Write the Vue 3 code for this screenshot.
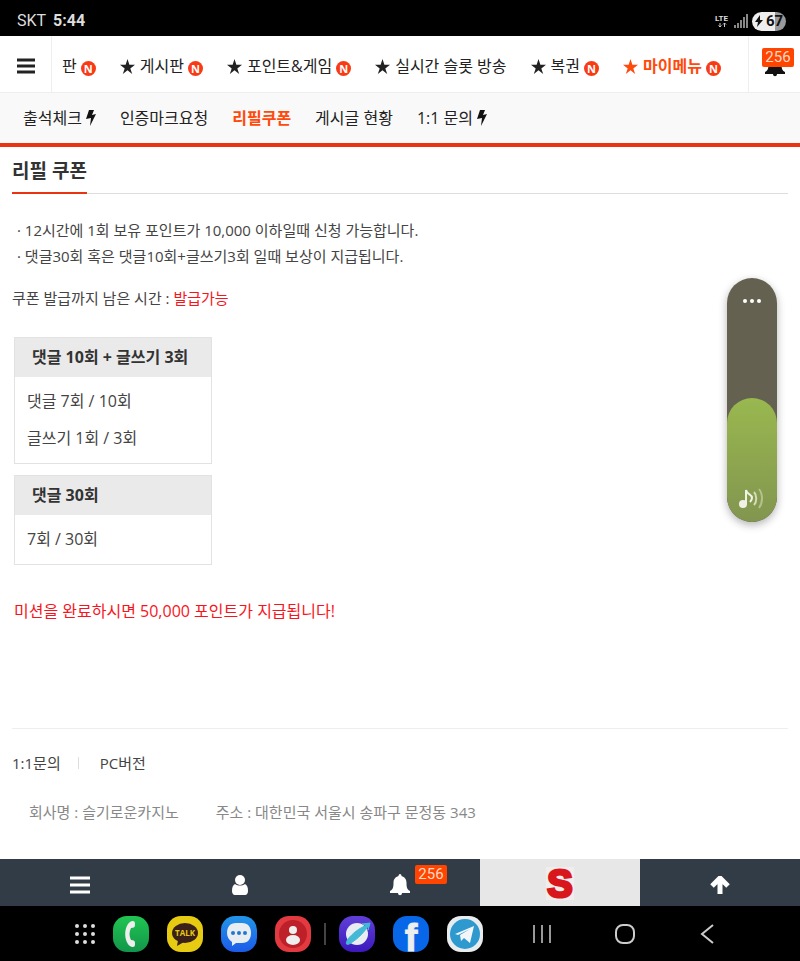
<script setup>
import { ref } from 'vue';

const mainMenu = ref([
  { id: 1, title: '판', star: false, isNew: true },
  { id: 2, title: '게시판', star: true, isNew: true },
  { id: 3, title: '포인트&게임', star: true, isNew: true },
  { id: 4, title: '실시간 슬롯 방송', star: true, isNew: false },
  { id: 5, title: '복권', star: true, isNew: true },
  { id: 6, title: '마이메뉴', star: true, isNew: true, active: true }
]);

const subMenu = ref([
  { id: 1, title: '출석체크', bolt: true },
  { id: 2, title: '인증마크요청' },
  { id: 3, title: '리필쿠폰', active: true },
  { id: 4, title: '게시글 현황' },
  { id: 5, title: '1:1 문의', bolt: true }
]);

const missions = ref([
  { id: 1, title: '댓글 10회 + 글쓰기 3회', rows: ['댓글 7회 / 10회', '글쓰기 1회 / 3회'] },
  { id: 2, title: '댓글 30회', rows: ['7회 / 30회'] }
]);

const alarmCount = ref(256);
const volume = ref(51);
</script>

<template>
  <div class="screen">
    <div class="status-bar">
      <div class="carrier"><span>SKT</span><b>5:44</b></div>
      <div class="status-icons">
        <svg width="15" height="16" viewBox="0 0 15 16">
          <text x="0" y="8" font-size="8" font-weight="700" fill="#ddd">LTE</text>
          <path d="M5 10v4M3.500 12.500L5 14l1.500-1.500M9.500 14v-4M8 11.500l1.500-1.500 1.500 1.500" stroke="#ccc" fill="none" />
        </svg>
        <svg width="14" height="14" viewBox="0 0 14 14" fill="#888">
          <path d="M0 11h2v3H0zM3 9h2v5H3zM6 6h2v8H6zM9 3h2v11H9zM12 0h2v14h-2z" />
        </svg>
        <div class="battery">
          <svg width="8" height="12" viewBox="0 0 8 12"><path d="M5 0L0 7h3L2 12l6-7H5z" fill="#111" /></svg>
          <span>67</span>
        </div>
      </div>
    </div>

    <header>
      <div class="top-nav">
        <button class="menu-button" aria-label="메뉴">
          <svg width="18" height="16" viewBox="0 0 18 16"><path d="M0 2h18M0 8h18M0 14h18" stroke="#222" stroke-width="3" /></svg>
        </button>
        <nav class="main-menu">
          <a v-for="item in mainMenu" :key="item.id" href="#" :class="{ active: item.active }">
            <svg v-if="item.star" width="15" height="15" viewBox="0 0 16 16">
              <path d="M8 0l2 6h6l-5 4 2 6-5-4-5 4 2-6-5-4h6z" fill="currentColor" />
            </svg>
            <span>{{ item.title }}</span>
            <i v-if="item.isNew" class="new-mark">N</i>
          </a>
        </nav>
        <button class="alarm-button" aria-label="알림">
          <svg width="20" height="22" viewBox="0 0 20 22">
            <path d="M10 0c1 0 1.500 1 1.500 2 3 1 5 3 5 7 0 5 1 7 3.500 8v2h-8c0 3-4 3-4 0H0v-2c2.500-1 3.500-3 3.500-8 0-4 2-6 5-7 0-1 .5-2 1.500-2z" fill="#111" />
          </svg>
          <span class="badge top-badge">{{ alarmCount }}</span>
        </button>
      </div>
      <nav class="sub-menu">
        <a v-for="item in subMenu" :key="item.id" href="#" :class="{ active: item.active }">
          <span>{{ item.title }}</span>
          <svg v-if="item.bolt" width="10" height="16" viewBox="0 0 10 16">
            <path d="M3 0h5L6 5l4-1-6 12 1-8-5 1z" fill="#111" />
          </svg>
        </a>
      </nav>
    </header>

    <main class="content">
      <div class="title-row">
        <h1>리필 쿠폰</h1>
      </div>
      <div class="notes">
        <p>· 12시간에 1회 보유 포인트가 10,000 이하일때 신청 가능합니다.</p>
        <p>· 댓글30회 혹은 댓글10회+글쓰기3회 일때 보상이 지급됩니다.</p>
      </div>
      <p class="remain">쿠폰 발급까지 남은 시간 : <span class="red">발급가능</span></p>
      <section v-for="mission in missions" :key="mission.id" class="mission">
        <h2>{{ mission.title }}</h2>
        <ul>
          <li v-for="row in mission.rows" :key="row">{{ row }}</li>
        </ul>
      </section>
      <p class="reward red">미션을 완료하시면 50,000 포인트가 지급됩니다!</p>
    </main>

    <footer class="footer">
      <div class="footer-links">
        <a href="#">1:1문의</a>
        <span class="divider"></span>
        <a href="#">PC버전</a>
      </div>
      <div class="company">
        <span>회사명 : 슬기로운카지노</span>
        <span>주소 : 대한민국 서울시 송파구 문정동 343</span>
      </div>
    </footer>

    <nav class="tab-bar">
      <button aria-label="전체메뉴">
        <svg width="20" height="18" viewBox="0 0 20 18"><path d="M0 2h20M0 9h20M0 16h20" stroke="#fff" stroke-width="3" /></svg>
      </button>
      <button aria-label="내정보">
        <svg width="18" height="20" viewBox="0 0 18 20" fill="#fff">
          <circle cx="9" cy="5" r="5" />
          <path d="M4 9c3 2 7 2 10 0 2 1 3 3 3 7 0 2-1 4-3 4H4c-2 0-3-2-3-4 0-4 1-6 3-7z" />
        </svg>
      </button>
      <button aria-label="알림">
        <svg width="20" height="22" viewBox="0 0 20 22">
          <path d="M10 0c1 0 1.500 1 1.500 2 3 1 5 3 5 7 0 5 1 7 3.500 8v2h-8c0 3-4 3-4 0H0v-2c2.500-1 3.500-3 3.500-8 0-4 2-6 5-7 0-1 .5-2 1.500-2z" fill="#fff" />
        </svg>
        <span class="badge tab-badge">{{ alarmCount }}</span>
      </button>
      <button class="home" aria-label="홈">
        <svg width="30" height="47" viewBox="0 0 30 47">
          <rect x="1" y="8" width="28" height="33" fill="#f2eded" />
          <text x="15" y="38" text-anchor="middle" font-size="38" font-weight="700" fill="#d9161c" stroke="#d9161c" stroke-width="3">S</text>
        </svg>
      </button>
      <button aria-label="맨위로">
        <svg width="20" height="18" viewBox="0 0 20 18"><path d="M10 18V3M2 10l8-8 8 8" fill="none" stroke="#fff" stroke-width="5" /></svg>
      </button>
    </nav>

    <div class="dock">
      <div class="apps">
        <button class="all-apps" aria-label="앱 목록">
          <svg width="20" height="20" viewBox="0 0 20 20" fill="#ddd">
            <circle v-for="n in 9" :key="n" :cx="2 + ((n - 1) % 3) * 8" :cy="2 + Math.floor((n - 1) / 3) * 8" r="2" />
          </svg>
        </button>
        <button class="app phone" aria-label="전화">
          <svg width="36" height="36" viewBox="0 0 36 36">
            <path d="M19 5c3 0 3 1 3 4 0 2-1 3-4 3-2 4-2 8 0 12 3 0 4 1 4 3 0 3 0 4-3 4-9-3-9-23 0-26z" fill="#eee" />
          </svg>
        </button>
        <button class="app talk" aria-label="카카오톡">
          <svg width="36" height="36" viewBox="0 0 36 36">
            <ellipse cx="18" cy="17" rx="13" ry="10" fill="#3b2019" />
            <path d="M11 24l-1 6 7-4z" fill="#3b2019" />
            <text x="18" y="20" text-anchor="middle" font-size="8" font-weight="700" fill="#e7cb12">TALK</text>
          </svg>
        </button>
        <button class="app message" aria-label="메시지">
          <svg width="36" height="36" viewBox="0 0 36 36">
            <path d="M15 7h6c6 0 9 4 9 10s-3 10-9 10h-6l-4 3v-4c-3-2-5-5-5-9 0-6 3-10 9-10z" fill="#e8edf2" />
            <g fill="#2376d2"><circle cx="12" cy="17" r="2" /><circle cx="18" cy="17" r="2" /><circle cx="24" cy="17" r="2" /></g>
          </svg>
        </button>
        <button class="app contacts" aria-label="연락처">
          <svg width="36" height="36" viewBox="0 0 36 36">
            <circle cx="18" cy="18" r="14" fill="#bd2029" />
            <circle cx="18" cy="14" r="4" fill="#eee" />
            <ellipse cx="18" cy="24" rx="7" ry="5" fill="#eee" />
          </svg>
        </button>
        <span class="app-divider"></span>
        <button class="app internet" aria-label="인터넷">
          <svg width="36" height="36" viewBox="0 0 36 36">
            <circle cx="18" cy="18" r="11" fill="#e9edf2" />
            <path d="M9 23c-3 5-2 7 3 4C20 22 26 15 30 9l-1 5 2-7-8 1 5 1C20 12 13 18 9 23z" fill="#44b9d6" stroke="#44b9d6" />
          </svg>
        </button>
        <button class="app facebook" aria-label="Facebook">
          <svg width="36" height="36" viewBox="0 0 36 36">
            <text x="18" y="35" text-anchor="middle" font-size="38" font-weight="700" fill="#eee" stroke="#eee">f</text>
          </svg>
        </button>
        <button class="app telegram" aria-label="Telegram">
          <svg width="36" height="36" viewBox="0 0 36 36">
            <circle cx="18" cy="18" r="15" fill="#2d99cf" />
            <path d="M8 18l19-8-4 17-6-5-3 3-1-6 10-6-12 6z" fill="#f2f6f8" />
          </svg>
        </button>
      </div>
      <div class="system-keys">
        <button aria-label="최근 앱">
          <svg width="20" height="20" viewBox="0 0 20 20"><path d="M2 1v18M10 1v18M18 1v18" stroke="#999" stroke-width="2" /></svg>
        </button>
        <button aria-label="홈 화면">
          <svg width="20" height="20" viewBox="0 0 20 20"><rect x="1" y="1" width="18" height="18" rx="7" fill="none" stroke="#ccc" stroke-width="2" /></svg>
        </button>
        <button aria-label="뒤로">
          <svg width="20" height="20" viewBox="0 0 20 20"><path d="M15 1L4 10l11 9" fill="none" stroke="#ccc" stroke-width="2" /></svg>
        </button>
      </div>
    </div>

    <div class="volume">
      <div class="volume-fill" :style="{ height: volume + '%' }"></div>
      <svg class="volume-dots" width="20" height="6" viewBox="0 0 20 6" fill="#fff">
        <circle cx="3" cy="3" r="2" /><circle cx="10" cy="3" r="2" /><circle cx="17" cy="3" r="2" />
      </svg>
      <svg class="volume-note" width="26" height="24" viewBox="0 0 26 24" fill="none">
        <ellipse cx="5" cy="18" rx="4" ry="4" fill="#f0f2e6" />
        <path d="M8 18V4c1 5 6 4 6 8 0 2-1 3-2 4" stroke="#f0f2e6" stroke-width="2" />
        <path d="M16 6c3 3 3 10 0 13" stroke="#d5dcba" stroke-width="2" />
        <path d="M21 3c4 5 4 14 0 19" stroke="#b5c18d" stroke-width="2" />
      </svg>
      <input v-model="volume" type="range" min="0" max="100" aria-label="볼륨">
    </div>
  </div>
</template>

<style>
body {
  margin: 0;
  background: #fff;
}
</style>

<style scoped>
.screen {
  position: relative;
  display: flex;
  flex-direction: column;
  min-height: 100vh;
  font-family: "Open Sans", "Noto Sans CJK KR", sans-serif;
  font-size: 15px;
  line-height: 26px;
  color: #444;
}

h1,
h2,
p,
ul {
  margin: 0;
  padding: 0;
  list-style: none;
}

a {
  color: inherit;
  text-decoration: none;
}

button {
  display: flex;
  align-items: center;
  justify-content: center;
  padding: 0;
  border: 0;
  background: none;
  font: inherit;
  cursor: pointer;
}

svg {
  display: block;
  flex-shrink: 0;
}

.red {
  color: #f8141c;
}

.status-bar {
  display: flex;
  align-items: center;
  justify-content: space-between;
  height: 36px;
  padding: 6px 14px 0 17px;
  box-sizing: border-box;
  background: #000;
  color: #ddd;
  font-family: Roboto, sans-serif;
}

.carrier {
  display: flex;
  gap: 7px;
  font-size: 16px;
}

.status-icons {
  display: flex;
  align-items: center;
  gap: 4px;
}

.battery {
  display: flex;
  align-items: center;
  justify-content: center;
  gap: 3px;
  width: 34px;
  height: 19px;
  border-radius: 10px;
  background: linear-gradient(90deg, #eee 67%, #999 67%);
  color: #111;
  font-size: 15px;
  font-weight: bold;
}

.top-nav {
  display: flex;
  height: 56px;
  border-bottom: 1px solid #eee;
}

.menu-button,
.alarm-button {
  position: relative;
  flex-shrink: 0;
  width: 52px;
  padding-top: 4px;
}

.menu-button {
  border-right: 1px solid #eee;
}

.alarm-button {
  border-left: 1px solid #eee;
}

.main-menu {
  display: flex;
  flex: 1;
  align-items: center;
  gap: 24px;
  padding: 4px 0 0 10px;
  overflow: hidden;
  white-space: nowrap;
  font-size: 16px;
  color: #222;
}

.main-menu a {
  display: flex;
  align-items: center;
  gap: 4px;
}

.main-menu svg + span {
  margin-left: 1px;
}

.main-menu .active,
.sub-menu .active {
  color: #ff4a0c;
  font-weight: bold;
}

.new-mark {
  width: 15px;
  height: 15px;
  margin-top: 4px;
  border-radius: 50%;
  background: #f83b14;
  color: #fff;
  font-size: 11px;
  font-style: normal;
  font-weight: bold;
  line-height: 15px;
  text-align: center;
}

.badge {
  position: absolute;
  width: 32px;
  height: 19px;
  border-radius: 2px;
  background: #ff4500;
  color: #ffd9c4;
  font-family: Roboto, sans-serif;
  font-size: 15px;
  line-height: 19px;
  text-align: center;
}

.top-badge {
  top: 12px;
  right: 6px;
}

.sub-menu {
  display: flex;
  align-items: center;
  gap: 24px;
  height: 50px;
  padding-left: 23px;
  border-bottom: 4px solid #e83410;
  background: #f9f9f9;
  color: #222;
  font-size: 16px;
  white-space: nowrap;
}

.sub-menu a {
  display: flex;
  align-items: center;
  gap: 4px;
}

.content {
  flex: 1;
  padding: 10px 12px 0;
}

.title-row {
  display: flex;
  height: 36px;
  border-bottom: 1px solid #ddd;
}

h1 {
  height: 35px;
  border-bottom: 2px solid #e83410;
  color: #333;
  font-size: 19px;
  line-height: 28px;
}

.notes {
  margin-top: 23px;
  padding-left: 5px;
}

.remain {
  margin-top: 16px;
}

.mission {
  width: 196px;
  margin: 11px 0 0 2px;
  border: 1px solid #e2e2e2;
  font-size: 16px;
}

.remain + .mission {
  margin-top: 26px;
}

h2 {
  padding-left: 17px;
  background: #eaeaea;
  color: #333;
  font-size: 16px;
  line-height: 39px;
  white-space: nowrap;
}

.mission ul {
  padding: 6px 12px;
  line-height: 37px;
}

.reward {
  margin: 33px 0 0 2px;
  font-size: 16px;
}

.footer {
  margin: 0 12px;
  padding: 21px 0 34px;
  border-top: 1px solid #eee;
}

.footer-links {
  display: flex;
  align-items: center;
}

.divider {
  width: 1px;
  height: 12px;
  margin: 0 21px 0 17px;
  background: #ddd;
}

.company {
  display: flex;
  flex-wrap: wrap;
  gap: 0 37px;
  margin-top: 23px;
  padding-left: 17px;
  color: #888;
}

.tab-bar {
  display: grid;
  grid-template-columns: repeat(5, 1fr);
  height: 47px;
  background: #323c47;
}

.tab-bar button {
  position: relative;
  padding-top: 4px;
}

.tab-bar .home {
  padding-top: 0;
  background: #e7e7e7;
  font-family: "Liberation Sans", sans-serif;
}

.tab-badge {
  top: 6px;
  left: calc(50% + 15px);
}

.dock {
  display: flex;
  align-items: center;
  justify-content: space-between;
  height: 55px;
  padding: 0 82px 0 74px;
  background: #000;
}

.apps {
  display: flex;
  align-items: center;
  gap: 18px;
}

.all-apps {
  width: 21px;
}

.app {
  width: 36px;
  height: 36px;
  border-radius: 14px;
}

.phone {
  background: linear-gradient(#20c552, #12964a);
}

.talk {
  background: #e7cb12;
}

.message {
  background: linear-gradient(#2295e8, #1c5be8);
}

.contacts {
  background: #e33a41;
}

.internet {
  background: linear-gradient(#6040d8, #3c18bd);
}

.facebook {
  background: #0866e8;
  font-family: "Liberation Sans", sans-serif;
}

.facebook svg {
  overflow: visible;
}

.telegram {
  background: #e8ecee;
}

.app-divider {
  width: 2px;
  height: 22px;
  margin: 0 -5px;
  background: #444;
}

.system-keys {
  display: flex;
  gap: 63px;
}

.volume {
  position: absolute;
  top: 278px;
  right: 23px;
  width: 50px;
  height: 244px;
  border-radius: 25px;
  overflow: hidden;
  background: #656150;
  box-shadow: 0 3px 8px rgba(0, 0, 0, 0.3);
}

.volume-fill {
  position: absolute;
  right: 0;
  bottom: 0;
  left: 0;
  border-radius: 25px;
  background: linear-gradient(#99b84f, #82954f);
}

.volume-dots {
  position: absolute;
  top: 20px;
  left: 15px;
}

.volume-note {
  position: absolute;
  bottom: 12px;
  left: 11px;
}

.volume input {
  position: absolute;
  inset: 0;
  width: 100%;
  height: 100%;
  margin: 0;
  opacity: 0;
  writing-mode: vertical-lr;
  direction: rtl;
  cursor: pointer;
}
</style>
